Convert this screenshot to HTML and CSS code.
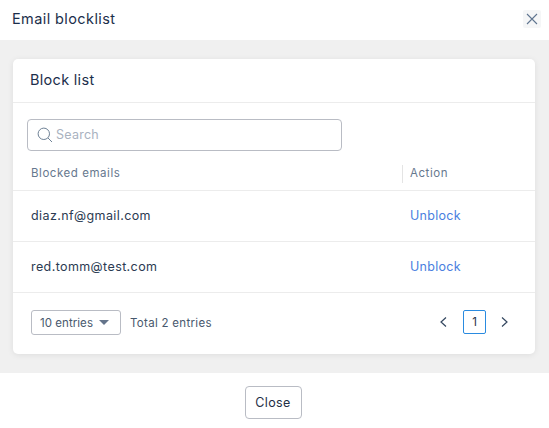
FILE: index.html
```html
<!DOCTYPE html>
<html lang="en">
<head>
<meta charset="utf-8">
<title>Email blocklist</title>
<link rel="stylesheet" href="styles.css">
</head>
<body>
<div class="modal">
  <header class="modal-head">
    <h1 class="modal-title">Email blocklist</h1>
    <button class="icon-close" aria-label="Close">
      <svg width="12" height="12" viewBox="0 0 12 12"><path d="M1 1l10 10M11 1L1 11" fill="none" stroke="#5f7590" stroke-width="1.1"/></svg>
    </button>
  </header>
  <main class="modal-body">
    <section class="card">
      <h2 class="card-title">Block list</h2>
      <div class="search-wrap">
        <div class="search">
          <svg width="16" height="16" viewBox="0 0 16 16"><circle cx="6.800" cy="6.800" r="5.700" fill="none" stroke="#6f8296" stroke-width="1"/><path d="M11 11l4 4" stroke="#6f8296" stroke-width="1" fill="none"/></svg>
          <span class="placeholder">Search</span>
        </div>
      </div>
      <div class="row head-row">
        <div class="col-email">Blocked emails</div>
        <div class="col-action"><span class="divider"></span>Action</div>
      </div>
      <div class="row data-row">
        <div class="col-email">diaz.nf@gmail.com</div>
        <div class="col-action"><a class="link">Unblock</a></div>
      </div>
      <div class="row data-row">
        <div class="col-email">red.tomm@test.com</div>
        <div class="col-action"><a class="link">Unblock</a></div>
      </div>
      <div class="card-foot">
        <div class="page-size">10 entries <span class="caret"></span></div>
        <div class="total">Total 2 entries</div>
        <div class="pager">
          <svg width="9" height="12" viewBox="0 0 9 12"><path d="M7 1.500L2 6l5 4.500" fill="none" stroke="#33465f" stroke-width="1.200"/></svg>
          <span class="page-num">1</span>
          <svg width="9" height="12" viewBox="0 0 9 12"><path d="M2 1.500L7 6l-5 4.500" fill="none" stroke="#33465f" stroke-width="1.200"/></svg>
        </div>
      </div>
    </section>
  </main>
  <footer class="modal-foot">
    <button class="btn">Close</button>
  </footer>
</div>
</body>
</html>
```
FILE: styles.css
```css
* { box-sizing: border-box; }
html, body { margin: 0; padding: 0; }
body {
  width: 549px;
  height: 428px;
  overflow: hidden;
  background: #fff;
  font-family: "Inter", "Liberation Sans", sans-serif;
  color: #1f2f46;
}
.modal { display: flex; flex-direction: column; height: 428px; }
.modal-head {
  height: 40px;
  display: flex;
  align-items: center;
  justify-content: space-between;
  padding: 0 8px 3px 12px;
}
.modal-title { margin: 0; font-size: 14.5px; font-weight: 400; color: #1b2e4b; letter-spacing: 0.4px; }
.icon-close {
  width: 18px; height: 18px; padding: 0; border: 0; border-radius: 2px;
  background: #f5f6f7; display: flex; align-items: center; justify-content: center;
  margin-top: 1px;
}
.modal-body { height: 333px; background: #f0f0f0; padding: 19px 14px 19px 13px; }
.card {
  height: 295px; background: #fff; border-radius: 5px;
  box-shadow: 0 1px 6px rgba(0,0,0,.08);
  display: flex; flex-direction: column;
}
.card-title {
  margin: 0; height: 44px; padding: 0 18px 2px 17px; display: flex; align-items: center;
  font-size: 14.5px; font-weight: 400; color: #1b2e4b; letter-spacing: 0.3px;
  border-bottom: 1px solid #ececec;
}
.search-wrap { padding: 16px 14px 0; }
.search {
  width: 315px; height: 32px; border: 1px solid #b9bcc4; border-radius: 4px;
  display: flex; align-items: center; gap: 3px; padding: 0 0 1px 9px;
}
.placeholder { font-size: 12.5px; color: #a9b2bf; letter-spacing: 0.25px; }
.row { display: flex; align-items: center; border-bottom: 1px solid #ececec; }
.head-row { height: 40px; padding-top: 4px; font-size: 11.5px; font-weight: 400; color: #66788e; letter-spacing: 0.55px; }
.data-row { height: 51px; padding-bottom: 2px; font-size: 12.5px; color: #2b3b52; letter-spacing: 0.4px; }
.col-email { width: 389px; padding-left: 18px; }
.col-action { position: relative; padding-left: 8px; }
.divider { position: absolute; left: 0; top: -1px; bottom: -3px; width: 1px; background: #e4e4e4; }
.link { color: #4a7fe0; letter-spacing: 0.3px; }
.card-foot { flex: 1; display: flex; align-items: center; padding: 0 26px 2px 18px; font-size: 11.5px; color: #48586d; }
.page-size {
  width: 90px; height: 25px; border: 1px solid #b9bcc4; border-radius: 3px;
  display: flex; align-items: center; gap: 6px; padding: 0 0 0 8px;
  color: #48586d; font-size: 11.5px; letter-spacing: 0.05px; white-space: nowrap;
}
.caret { width: 0; height: 0; border-left: 5px solid transparent; border-right: 5px solid transparent; border-top: 5px solid #64748b; }
.total { margin-left: 9px; letter-spacing: 0.3px; }
.pager { margin-left: auto; display: flex; align-items: center; gap: 15px; margin-top: -2px; }
.page-num {
  width: 23px; height: 24px; margin-right: -1px; border: 1px solid #2a8be0; border-radius: 2px;
  display: flex; align-items: center; justify-content: center; color: #1f2f46; font-size: 11.5px;
}
.modal-foot { flex: 1; display: flex; justify-content: center; padding-top: 13px; padding-right: 3px; }
.btn {
  width: 57px; height: 33px; background: #fff; border: 1px solid #b9bcc4; border-radius: 4px;
  font: 400 12.5px "Inter", "Liberation Sans", sans-serif; color: #1f2f46; letter-spacing: 0.35px;
}
```
